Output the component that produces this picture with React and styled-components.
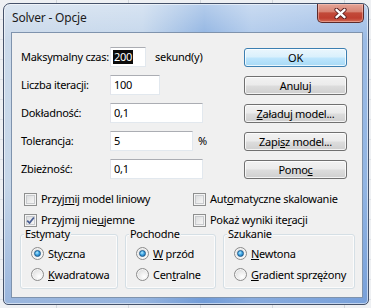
import styled, { createGlobalStyle } from 'styled-components'

const FONT = `"Noto Sans", "Open Sans", "DejaVu Sans", sans-serif`

const GlobalStyle = createGlobalStyle`
  html, body {
    margin: 0;
    padding: 0;
  }
  body {
    width: 371px;
    height: 308px;
    overflow: hidden;
    font-family: ${FONT};
    background-color: #eef0f3;
    background-image:
      repeating-linear-gradient(to right, transparent 0 56px, #d3d7dc 56px 57px, transparent 57px 72px),
      repeating-linear-gradient(to bottom, transparent 0 19px, #dde1e6 19px 20px);
  }
`

const Page = styled.div`
  padding: 3px 0 0 3px;
  box-sizing: border-box;
`

const Window = styled.div`
  width: 366px;
  height: 302px;
  box-sizing: border-box;
  display: flex;
  flex-direction: column;
  border: 1px solid #45526a;
  border-radius: 7px 7px 5px 5px;
  overflow: hidden;
  background:
    linear-gradient(to bottom, rgba(255,255,255,0.38) 0%, rgba(255,255,255,0.08) 12%, rgba(255,255,255,0) 60%, rgba(70,120,200,0.35) 100%),
    linear-gradient(to right, #c6d6e8 0%, #bfd3ea 38%, #86addf 55%, #a9c5e9 68%, #92b5e3 100%);
  box-shadow: inset 0 0 0 1px rgba(255,255,255,0.55);
`

const TitleBar = styled.div`
  height: 28px;
  flex-shrink: 0;
  display: flex;
  align-items: flex-start;
`

const Title = styled.div`
  padding: 6px 0 0 8px;
  font-size: 12px;
  line-height: 16px;
  color: #1b1b1b;
  letter-spacing: -0.2px;
`

const CloseButton = styled.div`
  margin-left: auto;
  margin-right: 4px;
  width: 47px;
  height: 19px;
  box-sizing: border-box;
  border: 1px solid #5c2a2a;
  border-top: none;
  border-radius: 0 0 5px 5px;
  display: flex;
  align-items: center;
  justify-content: center;
  background: linear-gradient(to bottom, #e4a497 0%, #d88474 42%, #c24a39 50%, #bf3f30 78%, #d26b55 100%);
  box-shadow: inset 0 0 0 1px rgba(255,210,200,0.45);
`

const Client = styled.div`
  flex: 1;
  margin: 0 5px 6px 7px;
  box-sizing: border-box;
  background: #f0f0f0;
  border: 1px solid #7f93ad;
  font-size: 11px;
  letter-spacing: -0.28px;
  color: #000;
`

const TopSection = styled.div`
  display: flex;
  padding: 14px 15px 0 9px;
`

const Form = styled.div`
  display: grid;
  grid-template-columns: 89px auto;
  grid-auto-rows: 20px;
  row-gap: 8px;
  align-items: center;
`

const Label = styled.div`
  line-height: 14px;
  white-space: nowrap;
`

const FieldRow = styled.div`
  display: flex;
  align-items: center;
  height: 20px;
`

const Field = styled.div`
  width: ${p => p.$w}px;
  height: 20px;
  box-sizing: border-box;
  background: #fff;
  border: 1px solid #e2e8ee;
  border-top-color: #abadb3;
  border-left-color: #e2e3ea;
  padding: 0 3px;
  display: flex;
  align-items: center;
  line-height: 14px;
  white-space: nowrap;
`

const Selected = styled.span`
  background: #0b0b0b;
  color: #fff;
  padding: 0 1px;
  margin-left: -1px;
  line-height: 14px;
`

const Suffix = styled.span`
  margin-left: ${p => p.$gap}px;
  line-height: 14px;
`

const ButtonColumn = styled.div`
  margin-left: auto;
  padding-top: 1px;
  display: flex;
  flex-direction: column;
  gap: 9px;
`

const Button = styled.div`
  width: 103px;
  height: 19px;
  box-sizing: border-box;
  border: 1px solid ${p => (p.$default ? '#3c7fb1' : '#707070')};
  border-radius: 3px;
  display: flex;
  align-items: center;
  justify-content: center;
  line-height: 14px;
  background: ${p =>
    p.$default
      ? 'linear-gradient(to bottom, #eaf6fd 0%, #d9f0fc 48%, #bee6fd 52%, #a7d9f5 100%)'
      : 'linear-gradient(to bottom, #f2f2f2 0%, #ebebeb 48%, #dddddd 52%, #cfcfcf 100%)'};
  box-shadow: inset 0 0 0 1px rgba(255,255,255,0.75);
`

const U = styled.span`
  text-decoration: underline;
  text-underline-offset: 1px;
`

const Checks = styled.div`
  display: grid;
  grid-template-columns: 169px 1fr;
  grid-auto-rows: 16px;
  row-gap: 5px;
  margin-top: 12px;
  padding-left: 12px;
`

const CheckItem = styled.div`
  display: flex;
  align-items: center;
  gap: 4px;
  line-height: 14px;
  white-space: nowrap;
`

const Box = styled.span`
  width: 13px;
  height: 13px;
  box-sizing: border-box;
  flex-shrink: 0;
  border: 1px solid #8e8f8f;
  background: linear-gradient(135deg, #d4d6d8 0%, #eeeeee 60%, #fbfbfb 100%);
  box-shadow: inset 0 0 0 1px #f4f4f4, inset 0 0 0 2px #c9cbce;
  display: flex;
  align-items: center;
  justify-content: center;
`

const Groups = styled.div`
  display: flex;
  gap: 7px;
  margin-top: 6px;
  padding-left: 8px;
`

const Group = styled.div`
  width: ${p => p.$w}px;
  height: 55px;
  box-sizing: border-box;
  display: flex;
  flex-direction: column;
  padding: 0 0 0 10px;
  border: 1px solid #d5dfe5;
  border-radius: 3px;
  box-shadow: inset 0 0 0 1px #fbfbfb;
`

const GroupTitle = styled.span`
  align-self: flex-start;
  margin: -8px 0 2px -7px;
  padding: 0 1px;
  background: #f0f0f0;
  line-height: 14px;
`

const RadioItem = styled.div`
  display: flex;
  align-items: center;
  gap: 4px;
  height: 21px;
  flex-shrink: 0;
  line-height: 14px;
  white-space: nowrap;
`

const Radio = styled.span`
  width: 13px;
  height: 13px;
  box-sizing: border-box;
  flex-shrink: 0;
  border-radius: 50%;
  border: 1px solid #8c8c8c;
  background: radial-gradient(circle at 65% 70%, #ffffff 0%, #e8e8e8 55%, #cfcfcf 100%);
  box-shadow: inset 0 0 0 1px #f6f6f6;
  display: flex;
  align-items: center;
  justify-content: center;
`

const Dot = styled.span`
  width: 7px;
  height: 7px;
  box-sizing: border-box;
  border-radius: 50%;
  border: 1px solid #1b5a8c;
  background: radial-gradient(circle at 40% 35%, #b7ecff 0%, #3fa6e6 45%, #17629e 100%);
`

const Check = () => (
  <svg width="9" height="9" viewBox="0 0 9 9">
    <path d="M1.2 4.6 L3.5 7 L7.9 1.5" fill="none" stroke="#4a5e92" strokeWidth="1.8" strokeLinejoin="round" />
  </svg>
)

const CheckBox = ({ checked, children }) => (
  <CheckItem>
    <Box>{checked && <Check />}</Box>
    <span>{children}</span>
  </CheckItem>
)

const RadioOption = ({ selected, children }) => (
  <RadioItem>
    <Radio>{selected && <Dot />}</Radio>
    <span>{children}</span>
  </RadioItem>
)

const CloseX = () => (
  <svg width="13" height="11" viewBox="0 0 13 11">
    <path d="M2.5 1.8 L10.5 9.2 M10.5 1.8 L2.5 9.2" stroke="#5a2020" strokeWidth="4.2" strokeLinecap="round" />
    <path d="M2.5 1.8 L10.5 9.2 M10.5 1.8 L2.5 9.2" stroke="#ffffff" strokeWidth="2.4" strokeLinecap="round" />
  </svg>
)

export default function App() {
  return (
    <>
      <GlobalStyle />
      <Page>
        <Window>
          <TitleBar>
            <Title>Solver - Opcje</Title>
            <CloseButton>
              <CloseX />
            </CloseButton>
          </TitleBar>
          <Client>
            <TopSection>
              <Form>
                <Label>Maksymalny czas:</Label>
                <FieldRow>
                  <Field $w={36}><Selected>200</Selected></Field>
                  <Suffix $gap={9}>sekund(y)</Suffix>
                </FieldRow>
                <Label>Liczba iteracji:</Label>
                <FieldRow>
                  <Field $w={50}>100</Field>
                </FieldRow>
                <Label>Dokładność:</Label>
                <FieldRow>
                  <Field $w={93}>0,1</Field>
                </FieldRow>
                <Label>Tolerancja:</Label>
                <FieldRow>
                  <Field $w={83}>5</Field>
                  <Suffix $gap={5}>%</Suffix>
                </FieldRow>
                <Label>Zbieżność:</Label>
                <FieldRow>
                  <Field $w={93}>0,1</Field>
                </FieldRow>
              </Form>
              <ButtonColumn>
                <Button $default>OK</Button>
                <Button>Anuluj</Button>
                <Button><U>Z</U>aładuj model...</Button>
                <Button>Zapi<U>s</U>z model...</Button>
                <Button>Pomo<U>c</U></Button>
              </ButtonColumn>
            </TopSection>

            <Checks>
              <CheckBox>Przyj<U>m</U>ij model liniowy</CheckBox>
              <CheckBox>Aut<U>o</U>matyczne skalowanie</CheckBox>
              <CheckBox checked>Przyjmij nie<U>u</U>jemne</CheckBox>
              <CheckBox>Pokaż wyniki ite<U>r</U>acji</CheckBox>
            </Checks>

            <Groups>
              <Group $w={98}>
                <GroupTitle>Estymaty</GroupTitle>
                <RadioOption selected>St<U>y</U>czna</RadioOption>
                <RadioOption><U>K</U>wadratowa</RadioOption>
              </Group>
              <Group $w={91}>
                <GroupTitle>Pochodne</GroupTitle>
                <RadioOption selected><U>W</U> przód</RadioOption>
                <RadioOption>Cen<U>t</U>ralne</RadioOption>
              </Group>
              <Group $w={132}>
                <GroupTitle>Szukanie</GroupTitle>
                <RadioOption selected><U>N</U>ewtona</RadioOption>
                <RadioOption><U>G</U>radient sprzężony</RadioOption>
              </Group>
            </Groups>
          </Client>
        </Window>
      </Page>
    </>
  )
}
